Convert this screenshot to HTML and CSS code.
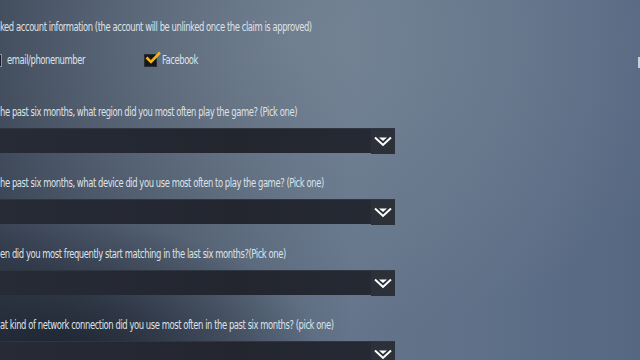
FILE: index.html
```html
<!DOCTYPE html>
<html lang="en">
<head>
    <meta charset="UTF-8">
    <meta name="viewport" content="width=device-width, initial-scale=1.0">
    <title>Claim Form</title>
    <link rel="stylesheet" href="styles.css">
</head>
<body>
    <div id="form">
        <div class="question"><span>ked account information (the account will be unlinked once the claim is approved)</span></div>

        <div class="options">
            <label class="option first">
                <span class="check"></span>
                <span class="text">email/phonenumber</span>
            </label>
            <label class="option">
                <span class="check checked">
                    <svg viewBox="0 0 16 14" width="16" height="14"><path d="M1.5 6.5 L6 11 L15 1.5" fill="none" stroke="#f2b519" stroke-width="2.6"/></svg>
                </span>
                <span class="text">Facebook</span>
            </label>
        </div>

        <div class="question"><span>he past six months, what region did you most often play the game? (Pick one)</span></div>
        <div class="dropdown"><span class="arrow"><svg viewBox="0 0 18 11" width="18" height="11"><path d="M1 1.5 L9 9 L17 1.5" fill="none" stroke="#fff" stroke-width="2"/><path d="M5 1.5 L13 1.5 L9 5 Z" fill="#fff"/></svg></span></div>

        <div class="question"><span>he past six months, what device did you use most often to play the game? (Pick one)</span></div>
        <div class="dropdown"><span class="arrow"><svg viewBox="0 0 18 11" width="18" height="11"><path d="M1 1.5 L9 9 L17 1.5" fill="none" stroke="#fff" stroke-width="2"/><path d="M5 1.5 L13 1.5 L9 5 Z" fill="#fff"/></svg></span></div>

        <div class="question"><span>en did you most frequently start matching in the last six months?(Pick one)</span></div>
        <div class="dropdown"><span class="arrow"><svg viewBox="0 0 18 11" width="18" height="11"><path d="M1 1.5 L9 9 L17 1.5" fill="none" stroke="#fff" stroke-width="2"/><path d="M5 1.5 L13 1.5 L9 5 Z" fill="#fff"/></svg></span></div>

        <div class="question"><span>at kind of network connection did you use most often in the past six months? (pick one)</span></div>
        <div class="dropdown last"><span class="arrow"><svg viewBox="0 0 18 11" width="18" height="11"><path d="M1 1.5 L9 9 L17 1.5" fill="none" stroke="#fff" stroke-width="2"/><path d="M5 1.5 L13 1.5 L9 5 Z" fill="#fff"/></svg></span></div>
    </div>

    <div id="edgeTab"></div>
</body>
</html>
```

FILE: styles.css
```css
body {
    margin: 0;
    width: 640px;
    height: 360px;
    overflow: hidden;
    font-family: "DejaVu Sans Condensed", "Liberation Sans", sans-serif;
    color: #dde2e8;
    background:
        radial-gradient(ellipse 260px 140px at 60px 360px, rgba(18, 22, 32, 0.75), rgba(18, 22, 32, 0)),
        radial-gradient(ellipse 420px 300px at 300px 40px, rgba(130, 145, 158, 0.55), rgba(130, 145, 158, 0)),
        linear-gradient(90deg, #384253 0%, #4e5b6e 30%, #64748a 55%, #5d6f87 80%, #566782 100%);
    position: relative;
}

#form {
    display: flex;
    flex-direction: column;
    align-items: flex-start;
    padding-top: 20px;
}

.question {
    font-size: 13px;
    line-height: 14px;
    height: 14px;
    letter-spacing: -0.6px;
    white-space: nowrap;
    margin-bottom: 9px;
}

.question span,
.option .text {
    display: inline-block;
    transform: scaleX(0.72);
    transform-origin: left center;
}

.options {
    display: flex;
    margin-top: 10px;
    margin-bottom: 38px;
    height: 14px;
    font-size: 13px;
    letter-spacing: -0.6px;
    line-height: 14px;
}

.option {
    display: flex;
    align-items: center;
    gap: 5px;
    white-space: nowrap;
}

.option.first {
    margin-left: -11px;
    width: 155px;
}

.check {
    flex: none;
    width: 13px;
    height: 13px;
    background: #1c1f26;
    border: 1px solid #8a93a0;
    box-sizing: border-box;
    position: relative;
}

.check.checked {
    border-color: #2a2d33;
    background: #15171c;
}

.check svg {
    position: absolute;
    left: 0;
    top: -4px;
}

.dropdown {
    width: 395px;
    height: 25px;
    margin-bottom: 23px;
    display: flex;
    justify-content: flex-end;
    background: linear-gradient(90deg, #272b36 0%, #23262f 60%, #262a34 100%);
    border-top: 1px solid #303542;
    box-sizing: border-box;
}

.dropdown.last {
    height: 22px;
    margin-bottom: 0;
}

.arrow {
    width: 24px;
    height: 25px;
    display: flex;
    align-items: center;
    justify-content: center;
    background: #2c3039;
}

#edgeTab {
    position: absolute;
    right: 0;
    top: 57px;
    width: 2px;
    height: 11px;
    background: #c9d1dc;
}
```
